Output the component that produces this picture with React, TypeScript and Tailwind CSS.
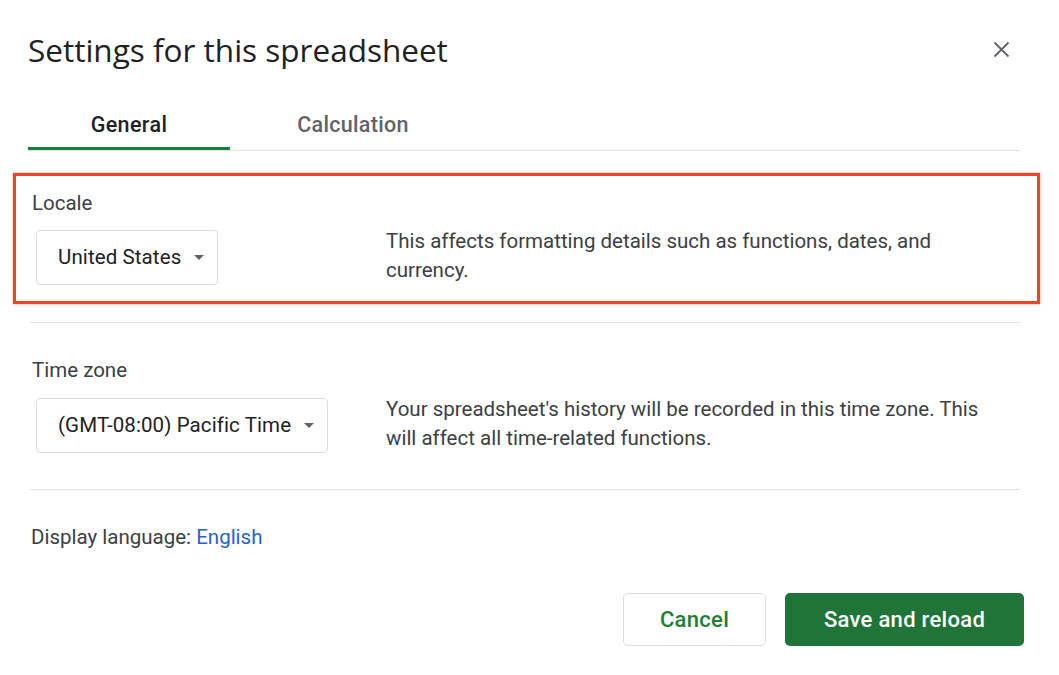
import React from "react";

function Caret() {
  return (
    <svg width="10" height="5" viewBox="0 0 10 5" className="ml-[13px]">
      <path d="M0 0 L10 0 L5 5 Z" fill="#5f6368" />
    </svg>
  );
}

function Dropdown({ label, width }: { label: string; width: string }) {
  return (
    <div
      className={`flex h-[55px] items-center rounded-[4px] border border-[#dadce0] pl-[21px] ${width}`}
    >
      <span className="text-[20.5px] tracking-[0.1px] text-[#202124]">{label}</span>
      <Caret />
    </div>
  );
}

export default function App() {
  return (
    <div
      className="relative h-[675px] w-[1059px] overflow-hidden bg-white"
      style={{ fontFamily: "Roboto, 'Liberation Sans', sans-serif" }}
    >
      {/* Header */}
      <div className="flex items-center justify-between pl-[28px] pr-[49px] pt-[28px]">
        <h1
          className="text-[31.5px] leading-[44px] text-[#202124]"
          style={{ fontFamily: "'Open Sans', Roboto, sans-serif" }}
        >
          Settings for this spreadsheet
        </h1>
        <svg width="17" height="17" viewBox="0 0 17 17" className="mt-[-2px]">
          <path d="M1.5 1.5 L15.5 15.5 M15.5 1.5 L1.5 15.5" stroke="#5f6368" strokeWidth="1.8" />
        </svg>
      </div>

      {/* Tabs */}
      <div className="mt-[29px] ml-[28px] mr-[39px] flex border-b border-[#e3e4e8]">
        <div className="flex h-[49px] w-[202px] items-center justify-center border-b-[3px] border-[#188038] pt-[3px]">
          <span className="text-[21.5px] font-medium tracking-[0.4px] text-[#202124]">General</span>
        </div>
        <div className="flex h-[49px] w-[246px] items-center justify-center">
          <span className="text-[21.5px] font-medium tracking-[0.3px] text-[#5f6368]">Calculation</span>
        </div>
      </div>

      {/* Locale (highlighted) */}
      <div className="ml-[13px] mr-[19px] mt-[22px] h-[131px] border-[3px] border-[#f2422a] pl-[16px] pt-[15px] shadow-[0_0_2px_rgba(242,66,42,0.6)]">
        <div className="text-[20.5px] leading-[24px] text-[#3c4043]">Locale</div>
        <div className="mt-[15px] flex">
          <div className="pl-[4px]">
            <Dropdown label="United States" width="w-[182px]" />
          </div>
          <div className="ml-[168px] mt-[-3px] w-[615px] text-[20.5px] leading-[29px] text-[#3c4043]">
            This affects formatting details such as functions, dates, and currency.
          </div>
        </div>
      </div>

      <div className="ml-[30px] mr-[39px] mt-[18px] border-t border-[#e3e4e8]" />

      {/* Time zone */}
      <div className="pl-[32px] pt-[35px]">
        <div className="text-[20.5px] leading-[24px] text-[#3c4043]">Time zone</div>
        <div className="mt-[16px] flex">
          <div className="pl-[4px]">
            <Dropdown label="(GMT-08:00) Pacific Time" width="w-[292px]" />
          </div>
          <div className="ml-[58px] mt-[-3px] w-[615px] text-[20.5px] leading-[29px] text-[#3c4043]">
            Your spreadsheet's history will be recorded in this time zone. This will affect all
            time-related functions.
          </div>
        </div>
      </div>

      <div className="ml-[30px] mr-[39px] mt-[36px] border-t border-[#e3e4e8]" />

      {/* Display language */}
      <div className="pl-[31px] pt-[35px] text-[20.5px] leading-[24px] text-[#3c4043]">
        Display language: <span className="text-[#2563d0]">English</span>
      </div>

      {/* Buttons */}
      <div className="mr-[35px] mt-[44px] flex justify-end gap-[19px]">
        <button className="h-[53px] w-[143px] rounded-[5px] border border-[#dadce0] bg-white text-[22px] font-medium tracking-[0.3px] text-[#1e7e34]">
          Cancel
        </button>
        <button className="h-[53px] w-[239px] rounded-[5px] bg-[#1f7537] text-[22px] font-medium tracking-[0.3px] text-white">
          Save and reload
        </button>
      </div>
    </div>
  );
}
